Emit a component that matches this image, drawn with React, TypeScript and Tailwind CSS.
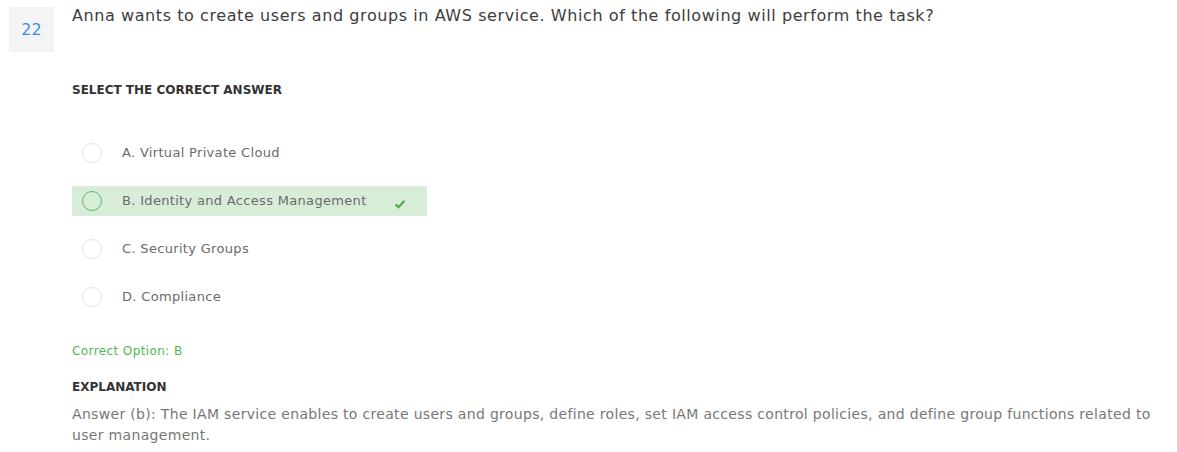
import React from 'react'

const options = [
  { key: 'A', label: 'Virtual Private Cloud', correct: false },
  { key: 'B', label: 'Identity and Access Management', correct: true },
  { key: 'C', label: 'Security Groups', correct: false },
  { key: 'D', label: 'Compliance', correct: false },
]

export default function App() {
  return (
    <div className="w-[1177px] h-[452px] bg-white font-['DejaVu_Sans',sans-serif] overflow-hidden">
      <div className="flex pt-[7px] pl-[9px]">
        <div className="w-[45px] h-[45px] bg-[#f4f4f4] flex items-center justify-center pt-[1px] text-[16px] text-[#3a8fe8]">
          22
        </div>
        <div className="pl-[18px] flex-1 pr-4">
          <p className="text-[16px] leading-[20px] text-[#3d3d3d] tracking-[0.58px] -mt-[1px]">
            Anna wants to create users and groups in AWS service. Which of the following will perform the task?
          </p>
        </div>
      </div>

      <div className="pl-[72px] pr-4">
        <h3 className="mt-[30px] text-[12px] font-bold text-[#333] leading-[16px]">SELECT THE CORRECT ANSWER</h3>

        <div className="mt-[40px] flex flex-col gap-[18px]">
          {options.map((o) => (
            <div
              key={o.key}
              className={`w-[355px] h-[30px] flex items-center pl-[10px] ${o.correct ? 'bg-[#d8edd7]' : ''}`}
            >
              <span
                className={`w-[20px] h-[20px] rounded-full border ${o.correct ? 'border-[#5cb85c]' : 'border-[#e2e2e2]'}`}
              />
              <span className="ml-[20px] text-[13px] text-[#6b6b6b] tracking-[0.32px]">
                {o.key}. {o.label}
              </span>
              {o.correct && (
                <svg className="ml-auto mr-[21px] mt-[6px]" width="12" height="10" viewBox="0 0 12 10">
                  <path d="M1.5 5.2 L4.5 8.2 L10.5 1.8" fill="none" stroke="#4cae4c" strokeWidth="2.2" />
                </svg>
              )}
            </div>
          ))}
        </div>

        <p className="mt-[31px] text-[12px] text-[#4fb84f] leading-[16px] tracking-[0.4px]">Correct Option: B</p>
        <h3 className="mt-[20px] text-[12px] font-bold text-[#333] leading-[16px]">EXPLANATION</h3>
        <p className="mt-[9px] text-[14px] leading-[21px] text-[#777] tracking-[0.32px] pr-2">
          Answer (b): The IAM service enables to create users and groups, define roles, set IAM access control policies, and define group functions related to user management.
        </p>
      </div>
    </div>
  )
}
